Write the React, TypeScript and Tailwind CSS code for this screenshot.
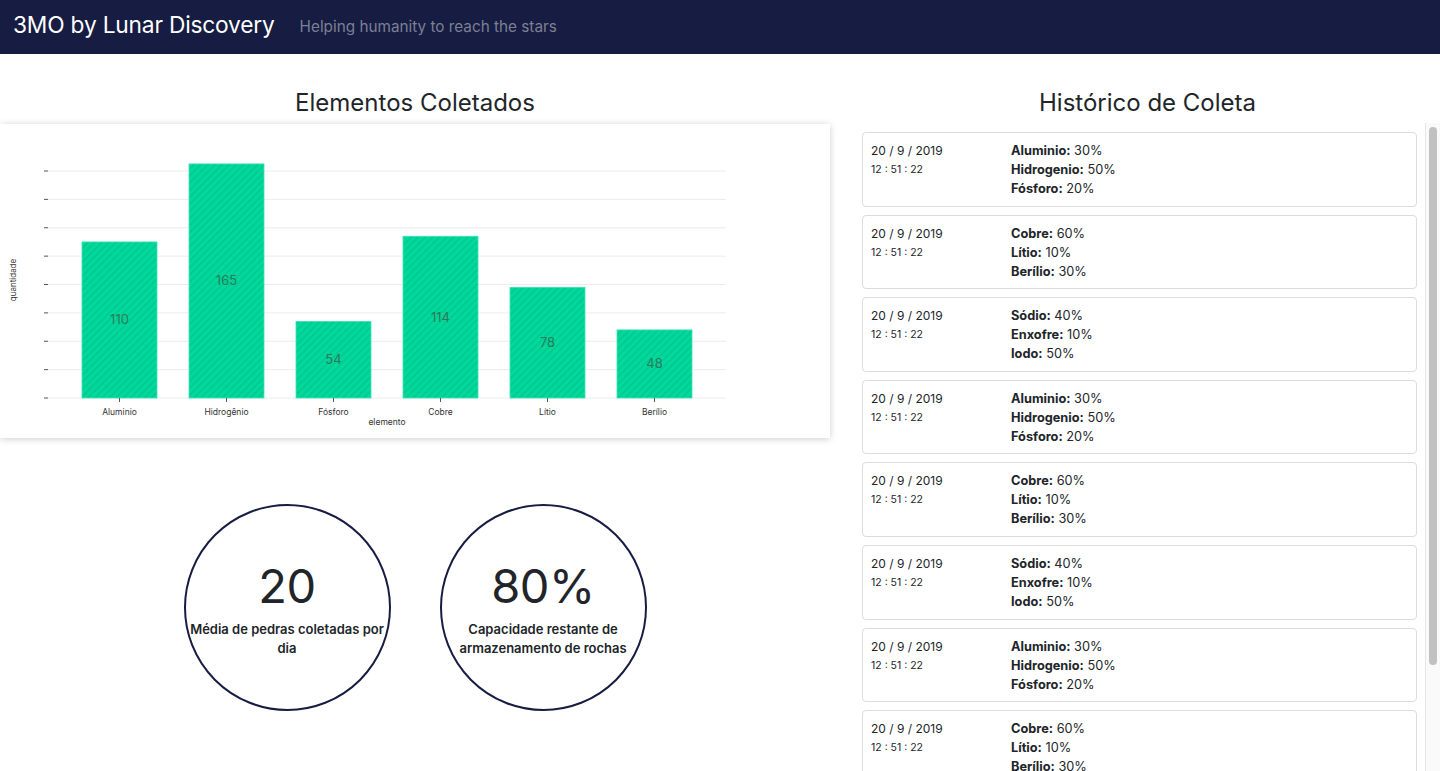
import React from "react";

type Bar = { name: string; value: number };

const bars: Bar[] = [
  { name: "Aluminio", value: 110 },
  { name: "Hidrogênio", value: 165 },
  { name: "Fósforo", value: 54 },
  { name: "Cobre", value: 114 },
  { name: "Lítio", value: 78 },
  { name: "Berílio", value: 48 },
];

type Entry = { label: string; pct: string };

const groups: Entry[][] = [
  [
    { label: "Aluminio", pct: "30%" },
    { label: "Hidrogenio", pct: "50%" },
    { label: "Fósforo", pct: "20%" },
  ],
  [
    { label: "Cobre", pct: "60%" },
    { label: "Lítio", pct: "10%" },
    { label: "Berílio", pct: "30%" },
  ],
  [
    { label: "Sódio", pct: "40%" },
    { label: "Enxofre", pct: "10%" },
    { label: "Iodo", pct: "50%" },
  ],
];

const history = Array.from({ length: 9 }, (_, i) => groups[i % 3]);

// chart geometry (px inside the card)
const BASE = 274;
const STEP = 28.375; // one gridline = 20 units
const UNIT = STEP / 20;

function BarChart() {
  const gridYs = Array.from({ length: 9 }, (_, i) => BASE - i * STEP);
  return (
    <svg width="830" height="314" className="block">
      <defs>
        <pattern id="stripes" width="5" height="5" patternUnits="userSpaceOnUse" patternTransform="rotate(45)">
          <rect width="5" height="5" fill="#00d99b" />
          <rect width="1.4" height="5" fill="#00c78f" />
        </pattern>
      </defs>
      {gridYs.map((y) => (
        <g key={y}>
          <line x1="48" x2="726" y1={y} y2={y} stroke="#ececec" strokeWidth="1" />
          <line x1="44" x2="48" y1={y} y2={y} stroke="#555" strokeWidth="1" />
        </g>
      ))}
      {bars.map((b, i) => {
        const x = 82 + i * 107;
        const h = b.value * UNIT;
        return (
          <g key={b.name}>
            <rect x={x} y={BASE - h} width="75" height={h} fill="url(#stripes)" stroke="#3fe3b4" strokeWidth="0.8" />
            <text x={x + 37.5} y={BASE - h / 2 + 4.5} textAnchor="middle" fontSize="13" fill="#2c7a5c" fontFamily="Inter, sans-serif">
              {b.value}
            </text>
            <line x1={x + 37.5} x2={x + 37.5} y1={BASE} y2={BASE + 4} stroke="#555" strokeWidth="1" />
            <text x={x + 37.5} y={291} textAnchor="middle" fontSize="8.5" fill="#333" fontFamily="Inter, sans-serif">
              {b.name}
            </text>
          </g>
        );
      })}
      <text x="387" y="301" textAnchor="middle" fontSize="8.5" fill="#333" fontFamily="Inter, sans-serif">
        elemento
      </text>
      <text x="16" y="156" textAnchor="middle" fontSize="8" fill="#333" fontFamily="Inter, sans-serif" transform="rotate(-90 16 156)">
        quantidade
      </text>
    </svg>
  );
}

function StatCircle({ value, lines }: { value: string; lines: string[] }) {
  return (
    <div className="w-[207px] h-[207px] rounded-full border-2 border-[#161c42] flex flex-col items-center justify-center text-center">
      <div className="text-[47px] leading-[58px] tracking-[-0.5px] text-[#212529]">{value}</div>
      <div className="mt-[5px] text-[13px] leading-[19px] font-semibold text-[#212529]">
        {lines.map((l) => (
          <div key={l} className="whitespace-nowrap">{l}</div>
        ))}
      </div>
    </div>
  );
}

export default function App() {
  return (
    <div className="w-[1440px] h-[771px] overflow-hidden bg-white font-['Inter',sans-serif] text-[#212529]">
      {/* Navbar */}
      <header className="h-[54px] bg-[#161c42] flex items-center px-[13px] pb-[4px]">
        <span className="text-white text-[22.75px] tracking-[-0.2px]">3MO by Lunar Discovery</span>
        <span className="ml-[25px] text-[15.3px] text-[#7c8094] mt-[4px]">Helping humanity to reach the stars</span>
      </header>

      <main className="flex">
        {/* Left column */}
        <section className="w-[830px] shrink-0">
          <h2 className="mt-[34px] mb-[7px] h-[29px] text-center text-[24px] leading-[29px]">Elementos Coletados</h2>
          <div className="bg-white shadow-[0_1px_7px_rgba(0,0,0,0.2)]">
            <BarChart />
          </div>
          <div className="mt-[66px] flex justify-center gap-[49px]">
            <StatCircle value="20" lines={["Média de pedras coletadas por", "dia"]} />
            <StatCircle value="80%" lines={["Capacidade restante de", "armazenamento de rochas"]} />
          </div>
        </section>

        {/* Right column */}
        <section className="flex-1 pl-[25px]">
          <h2 className="mt-[34px] mb-[6px] h-[29px] text-center text-[24px] leading-[29px]">Histórico de Coleta</h2>
          <div className="h-[650px] flex">
            <div className="flex-1 overflow-hidden pl-[7px] pr-[8px] pt-[9px]">
              {history.map((items, i) => (
                <div key={i} className="mb-[8px] flex rounded-[4px] border border-[#dcdcdc] pl-[8px] pt-[8px] pb-[7.6px]">
                  <div className="w-[140px] shrink-0">
                    <div className="text-[12px] leading-[19px]">20 / 9 / 2019</div>
                    <div className="text-[10.5px] leading-[19px]">12 : 51 : 22</div>
                  </div>
                  <div className="text-[12.75px] leading-[19px]">
                    {items.map((e) => (
                      <div key={e.label}>
                        <span className="font-bold">{e.label}:</span> {e.pct}
                      </div>
                    ))}
                  </div>
                </div>
              ))}
            </div>
            {/* scrollbar */}
            <div className="w-[15px] shrink-0 bg-[#fafafa] border-l border-[#e6e6e6] pt-[4px] pl-[3px]">
              <div className="w-[8px] h-[538px] rounded-full bg-[#c1c1c1]" />
            </div>
          </div>
        </section>
      </main>
    </div>
  );
}
